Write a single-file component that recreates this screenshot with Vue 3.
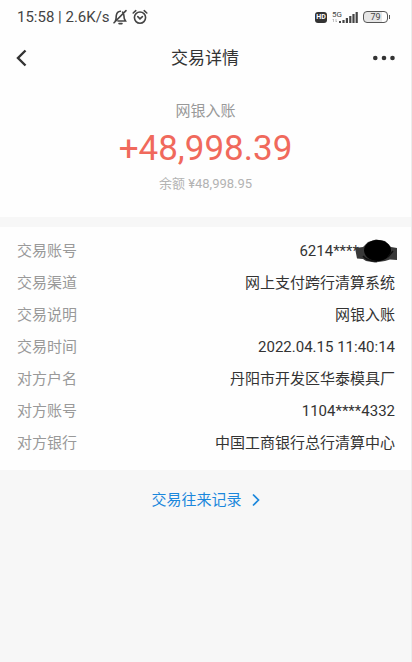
<script setup>
const details = [
  { label: '交易账号', value: '6214****', masked: true },
  { label: '交易渠道', value: '网上支付跨行清算系统' },
  { label: '交易说明', value: '网银入账' },
  { label: '交易时间', value: '2022.04.15 11:40:14' },
  { label: '对方户名', value: '丹阳市开发区华泰模具厂' },
  { label: '对方账号', value: '1104****4332' },
  { label: '对方银行', value: '中国工商银行总行清算中心' },
]
</script>

<template>
  <div class="page">
    <div class="status">
      <span class="clock">15:58 | 2.6K/s</span>
      <svg class="bell" width="16" height="16" viewBox="0 0 16 16" fill="none" stroke="currentColor" stroke-width="1.6" stroke-linecap="round">
        <path d="M3.4 11.8C4.3 10.5 4 8.5 4.3 6.5C4.8 3.7 6.3 2.4 8.4 2.3M10.6 3.2C12.3 4.8 11.8 7 12.2 9.2C12.4 10.5 13.2 11.2 13.6 12H6M14 1.6L2 13.8M7 14.6H10" />
      </svg>
      <svg class="alarm" width="16" height="16" viewBox="0 0 16 16" fill="none" stroke="currentColor" stroke-width="1.6" stroke-linecap="round">
        <circle cx="8" cy="8.6" r="5.6" />
        <path d="M1.2 4L3.8 1.7M14.8 4L12.2 1.7M5.8 7.6L8 9.8L10.4 7.6" />
      </svg>
      <span class="hd">HD</span>
      <svg class="signal" width="26" height="14" viewBox="0 0 26 14">
        <text x="0" y="7" class="net">5G</text>
        <path d="M1.5 9V12M0.5 10L1.5 9M4 9V12M5 11L4 12" fill="none" stroke="#aaa" stroke-width="0.7" />
        <path d="M7 11h2v2H7zM10.4 10h2.2v3h-2.2zM13.800 8H16v5h-2.200zM17.200 6h2.200v7h-2.200zM20.400 4h2.200v9h-2.200zM23.600 2h2.200v11h-2.200z" fill="currentColor" />
      </svg>
      <span class="battery">79</span>
    </div>

    <header class="nav">
      <button class="icon-button" aria-label="返回">
        <svg width="12" height="18" viewBox="0 0 12 18" fill="none" stroke="currentColor" stroke-width="2.4">
          <path d="M10.500 1.500L3 9L10.500 16.500" />
        </svg>
      </button>
      <h1>交易详情</h1>
      <button class="icon-button more" aria-label="更多">
        <svg width="22" height="6" viewBox="0 0 22 6" fill="currentColor">
          <circle cx="2.300" cy="3" r="2.300" /><circle cx="11" cy="3" r="2.300" /><circle cx="19.500" cy="3" r="2.300" />
        </svg>
      </button>
    </header>

    <section class="summary">
      <p class="kind">网银入账</p>
      <p class="amount">+48,998.39</p>
      <p class="balance">余额 ¥48,998.95</p>
    </section>

    <dl class="details">
      <div v-for="item in details" :key="item.label" class="row">
        <dt>{{ item.label }}</dt>
        <dd>
          {{ item.value }}<svg v-if="item.masked" class="mask" width="42" height="24" viewBox="0 0 42 24">
            <path d="M0 9L8 8L13 3L21 0.500L30 2L36 8L42 9V21L35 20.500L30 22L20 23.500L11 22L8 20L2 19.500Z" fill="#383838" />
            <ellipse cx="22.500" cy="11.500" rx="13.500" ry="10.500" fill="#000" />
            <path d="M8 17C11 21 16 22 22 22.500M33 18L38 12" fill="none" stroke="#111" stroke-width="1.500" />
          </svg>
        </dd>
      </div>
    </dl>

    <a class="history" href="#">
      交易往来记录
      <svg width="8" height="14" viewBox="0 0 8 14" fill="none" stroke="currentColor" stroke-width="1.7">
        <path d="M1 1.500L6.500 7L1 12.500" />
      </svg>
    </a>
  </div>
</template>

<style>
body {
  background: #f7f7f7;
}
</style>

<style scoped>
.page {
  box-sizing: border-box;
  min-height: 100vh;
  border-right: 1px solid #ececec;
  background: #f7f7f7;
  color: #333;
  font-family: Roboto, "Noto Sans CJK SC", sans-serif;
  font-size: 15px;
  line-height: 20px;
}
.status {
  display: flex;
  align-items: center;
  height: 34px;
  padding: 0 23px 0 17px;
  background: #fefefe;
  color: #444;
}
.bell {
  margin-left: 2px;
}
.alarm {
  margin-left: 4px;
}
.hd {
  margin-left: auto;
  width: 12px;
  border-radius: 3px;
  background: #333;
  color: #fff;
  font-size: 7px;
  font-weight: 700;
  line-height: 11px;
  text-align: center;
}
.signal {
  margin-left: 5px;
}
.net {
  fill: currentColor;
  font-size: 8px;
}
.battery {
  position: relative;
  box-sizing: border-box;
  width: 25px;
  height: 12px;
  margin-left: 5px;
  border: 1px solid #555;
  border-radius: 4px;
  background: linear-gradient(90deg, #e6e6e6 79%, #fefefe 79%);
  font-size: 9px;
  line-height: 10px;
  text-align: center;
}
.battery::after {
  content: "";
  position: absolute;
  top: 3px;
  right: -3px;
  width: 1px;
  height: 4px;
  background: #555;
}
.nav {
  display: flex;
  align-items: center;
  justify-content: space-between;
  height: 47px;
  padding: 0 16px 0 15px;
  background: #fefefe;
}
h1 {
  margin: 0;
  font-size: 17px;
  font-weight: 400;
}
.icon-button {
  display: flex;
  width: 24px;
  padding: 0;
  border: 0;
  background: none;
  color: #333;
}
.more {
  justify-content: flex-end;
}
.summary {
  padding: 20px 0 24px;
  background: #fefefe;
  text-align: center;
}
.summary p {
  margin: 0;
}
.kind {
  color: #999;
}
.amount {
  padding: 8px 0 6px;
  color: #f0695c;
  font-size: 35px;
  line-height: 40px;
}
.balance {
  color: #b3b3b3;
  font-size: 13px;
  line-height: 18px;
}
.details {
  margin: 10px 0 0;
  padding: 8px 16px 11px 17px;
  background: #fefefe;
}
.row {
  display: flex;
  justify-content: space-between;
  line-height: 32px;
}
dt {
  color: #999;
}
dd {
  display: flex;
  align-items: center;
  margin: 0;
}
.mask {
  margin: 0 -2px 0 -4px;
}
.history {
  display: flex;
  align-items: center;
  justify-content: center;
  gap: 10px;
  padding: 20px 0;
  color: #1b87dc;
  text-decoration: none;
}
</style>
